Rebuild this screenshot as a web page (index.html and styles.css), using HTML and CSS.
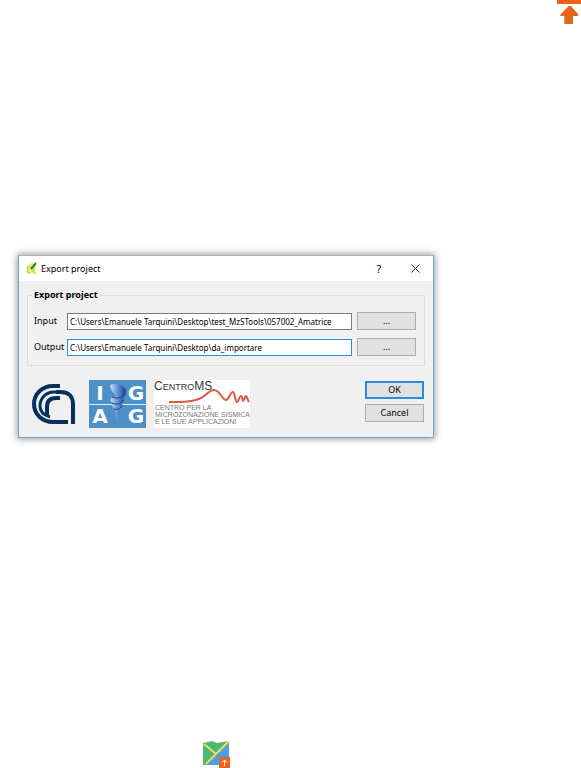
FILE: index.html
```
<!DOCTYPE html>
<html lang="en">
<head>
  <meta charset="UTF-8" />
  <meta name="viewport" content="width=device-width, initial-scale=1.0"/>
  <title>Export project</title>
  <link rel="stylesheet" href="styles.css">
</head>
<body>

  <!-- Export icon -->
  <svg class="export-icon" viewBox="0 0 24 24" aria-hidden="true">
    <path fill="#e8641b" d="M0 0h24v4H0z"/>
    <path fill="#a9a39f" d="M3 15l9-9v3l-4 15H7v-8H3z"/>
    <path fill="#e8641b" d="M12 6h2l7 8v2h-5v8H8v-8H4v-2z"/>
  </svg>

  <!-- Export dialog -->
  <form class="dialog">
    <div class="titlebar">
      <svg class="app-icon" viewBox="0 0 12 13" aria-hidden="true">
        <path fill="#e3ee7c" d="M2 3l4-2 4 2-1 7 1 2-4-1-4 1-1-4z"/>
        <path fill="none" stroke="#b4d23f" d="M2 4l-1 6 3 1M8 5l-1 5 3 2"/>
        <path fill="none" stroke="#24842e" stroke-width="2" d="M10 1L5 7"/>
      </svg>
      <h1>Export project</h1>
      <button type="button" class="title-button" aria-label="Help">?</button>
      <button type="button" class="title-button" aria-label="Close">
        <svg class="close-icon" viewBox="0 0 9 9"><path fill="none" stroke="#222" d="M.5 .5l8 8M8.500 .5l-8 8"/></svg>
      </button>
    </div>

    <div class="content">
      <fieldset>
        <legend>Export project</legend>
        <div class="row">
          <label for="input">Input</label>
          <input type="text" id="input" value="C:\Users\Emanuele Tarquini\Desktop\test_MzSTools\057002_Amatrice" />
          <button type="button" aria-label="Browse input">...</button>
        </div>
        <div class="row">
          <label for="output">Output</label>
          <input type="text" id="output" class="active" value="C:\Users\Emanuele Tarquini\Desktop\da_importare" />
          <button type="button" aria-label="Browse output">...</button>
        </div>
      </fieldset>

      <div class="bottom">
        <!-- CNR -->
        <svg class="logo-cnr" viewBox="0 0 43 41" aria-hidden="true">
          <g fill="none" stroke="#07305f" stroke-width="4">
            <path d="M28 2H21C10 2 2 10 2 20S10 38 21 38H36"/>
            <path stroke-width="3" d="M18 33C11 31 8 27 8 22 8 14 14 8 22 8H27"/>
            <path d="M24 8H29C37 8 41 13 41 20V40"/>
            <path d="M28 14H24C18 14 15 17 15 23V31"/>
          </g>
        </svg>

        <!-- IGAG -->
        <svg class="logo-igag" viewBox="0 0 57 48" aria-hidden="true">
          <defs>
            <linearGradient id="drill">
              <stop offset="0" stop-color="#c5e0f7"/>
              <stop offset=".5" stop-color="#5f8dce"/>
              <stop offset="1" stop-color="#223f93"/>
            </linearGradient>
          </defs>
          <path fill="#4b91c8" d="M0 0h57v48H0z"/>
          <path stroke="#e5f0f8" d="M0 24.500h57"/>
          <path fill="url(#drill)" d="M21 5c4-2 11-1 15 3 2 4 1 8-2 10 2 1 1 4-1 5 1 3 0 5-2 6l-2 17-3-17c-3-2-4-4-2-6-3-1-3-4-1-6 3 1 4-1 3-3-2-1-5-5-5-9z"/>
          <path fill="none" stroke="#263f8e" d="M23 17c5 2 10 1 12-3M23 23c5 2 9 1 11-3M25 29c4 1 6 0 8-3"/>
          <g class="igag-text">
            <text x="11" y="20">I</text>
            <text x="47" y="20">G</text>
            <text x="11" y="43">A</text>
            <text x="47" y="43">G</text>
          </g>
        </svg>

        <!-- Centro MS -->
        <svg class="logo-centro" viewBox="0 0 96 48" aria-hidden="true">
          <path fill="#fff" d="M0 0h96v48H0z"/>
          <path fill="none" stroke="#d95a42" stroke-width="2" stroke-linejoin="round" d="M15 22c14 0 24 0 32-4 6-3 8-8 13-8 6 0 8 10 12 10 3 0 4-8 7-8 2 0 2 10 4 10s2-6 4-6 1 5 2 5 2-5 3-5 1 3 3 6"/>
          <text class="centro-name" x="0" y="10">C<tspan class="small-caps">ENTRO</tspan>MS</text>
          <g class="centro-text">
            <text x="1" y="30">CENTRO PER LA</text>
            <text x="1" y="37">MICROZONAZIONE SISMICA</text>
            <text x="1" y="44">E LE SUE APPLICAZIONI</text>
          </g>
        </svg>

        <div class="actions">
          <button type="submit" class="default">OK</button>
          <button type="button">Cancel</button>
        </div>
      </div>
    </div>
  </form>

  <!-- Map export icon -->
  <svg class="map-icon" viewBox="0 0 27 27" aria-hidden="true">
    <path fill="#4dba72" d="M0 2l5-1 4-1 5 2 6-1 6-1v24H0z"/>
    <path fill="#4a9fe0" d="M26 0v24H3z"/>
    <path fill="none" stroke="#f6d95a" stroke-width="2" d="M1 3l12 10M26 0L3 23"/>
    <path fill="#e8641b" d="M16 16h11v11H16z"/>
    <path fill="none" stroke="#fff" d="M21.500 25v-6M19 21.500l2.500-2.500 2.500 2.500"/>
  </svg>

</body>
</html>
```

FILE: styles.css
```
body {
  font-family: "Noto Sans", "Open Sans", sans-serif;
  font-size: 9px;
  line-height: 12px;
  background: #fff;
  margin: 0;
  color: #000;
  display: flex;
  flex-direction: column;
}
svg {
  display: block;
  flex-shrink: 0;
}
.export-icon {
  width: 24px;
  height: 24px;
  align-self: flex-end;
}
.dialog {
  box-sizing: border-box;
  width: 71%;
  min-width: 416px;
  margin: 231px 0 0 18px;
  background: #f0f0f0;
  border: 1px solid #6fa3cc;
  border-top-color: #a9b4bd;
  box-shadow: 0 0 7px 1px #999;
}
.titlebar {
  display: flex;
  align-items: center;
  height: 25px;
  padding: 0 0 0 7px;
  background: #fff;
}
.app-icon {
  width: 12px;
  height: 13px;
}
h1 {
  flex: 1;
  margin: 0 0 0 3px;
  font-size: 9px;
  font-weight: normal;
}
button {
  box-sizing: border-box;
  height: 18px;
  padding: 0;
  font: inherit;
  color: #000;
  background: #e1e1e1;
  border: 1px solid #adadad;
}
.title-button {
  display: flex;
  align-items: center;
  justify-content: center;
  width: 36px;
  height: 24px;
  font-size: 11px;
  background: none;
  border: none;
}
.close-icon {
  width: 9px;
  height: 9px;
}
.content {
  padding: 8px 8px 9px;
}
fieldset {
  margin: 0;
  padding: 11px 8px 9px 6px;
  border: 1px solid #dcdcdc;
}
legend {
  margin-left: -2px;
  padding: 0 2px;
  font-weight: bold;
}
.row {
  display: grid;
  grid-template-columns: 28px 1fr 59px;
  align-items: center;
  gap: 5px;
}
.row + .row {
  margin-top: 8px;
}
input {
  box-sizing: border-box;
  width: 100%;
  min-width: 0;
  height: 17px;
  padding: 0 2px;
  font-family: "Noto Sans", sans-serif;
  font-size: 8px;
  color: #000;
  background: #fff;
  border: 1px solid #7a7a7a;
  outline: none;
}
input.active {
  border: 1px solid #2a8bdf;
}
.bottom {
  display: flex;
  align-items: center;
  margin: 14px 1px 0 5px;
}
.logo-cnr {
  width: 43px;
  height: 41px;
}
.logo-igag {
  width: 57px;
  height: 48px;
  margin-left: 14px;
}
.logo-centro {
  width: 96px;
  height: 48px;
  margin-left: 8px;
}
.igag-text {
  font-family: "DejaVu Sans", sans-serif;
  font-size: 20px;
  font-weight: bold;
  text-anchor: middle;
  fill: #fff;
}
.centro-name {
  font-family: "Liberation Sans", sans-serif;
  font-size: 12px;
  fill: #333;
}
.small-caps {
  font-size: 9px;
}
.centro-text {
  font-family: "Liberation Sans", sans-serif;
  font-size: 7px;
  fill: #777;
}
.actions {
  display: flex;
  flex-direction: column;
  align-self: flex-start;
  gap: 5px;
  width: 59px;
  margin: 1px 0 0 auto;
}
.default {
  border: 2px solid #2a8bdf;
}
.map-icon {
  width: 27px;
  height: 27px;
  margin: 303px 0 0 203px;
}
```
